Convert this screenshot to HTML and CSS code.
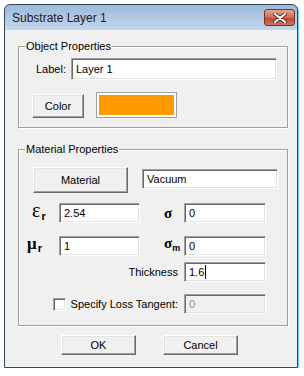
FILE: index.html
```html
<!DOCTYPE html>
<html lang="en">
<head>
    <meta charset="UTF-8">
    <meta name="viewport" content="width=device-width, initial-scale=1.0">
    <title>Substrate Layer 1</title>
    <link rel="stylesheet" href="styles.css">
</head>
<body>
    <div class="window">
        <div class="titlebar">
            <span class="title">Substrate Layer 1</span>
            <button class="close-btn" aria-label="Close">
                <svg width="14" height="10" viewBox="0 0 14 10">
                    <path d="M2 1 L12 9 M12 1 L2 9" stroke="#5a2a24" stroke-width="4" stroke-linecap="round"/>
                    <path d="M2 1 L12 9 M12 1 L2 9" stroke="#fff" stroke-width="2.2" stroke-linecap="round"/>
                </svg>
            </button>
        </div>

        <div class="content">
            <fieldset class="group group-object">
                <legend>Object Properties</legend>

                <div class="label-row">
                    <label for="layer_label">Label:</label>
                    <div class="edit edit-label" id="layer_label">Layer 1</div>
                </div>

                <div class="color-row">
                    <button class="btn btn-color">Color</button>
                    <div class="swatch"><div class="swatch-fill"></div></div>
                </div>
            </fieldset>

            <fieldset class="group group-material">
                <legend>Material Properties</legend>

                <div class="material-row">
                    <button class="btn btn-material">Material</button>
                    <div class="edit edit-material">Vacuum</div>
                </div>

                <div class="prop-row row-eps">
                    <span class="sym sym-eps">&epsilon;<sub>r</sub></span>
                    <div class="edit">2.54</div>
                    <span class="sym sym-sigma">&sigma;</span>
                    <div class="edit">0</div>
                </div>

                <div class="prop-row row-mu">
                    <span class="sym sym-mu">&mu;<sub>r</sub></span>
                    <div class="edit">1</div>
                    <span class="sym sym-sigma">&sigma;<sub>m</sub></span>
                    <div class="edit">0</div>
                </div>

                <div class="prop-row row-thick">
                    <span class="wide-label">Thickness</span>
                    <div class="edit">1.6<span class="caret"></span></div>
                </div>

                <div class="prop-row row-loss">
                    <span class="wide-label">
                        <span class="checkbox"></span>
                        Specify Loss Tangent:
                    </span>
                    <div class="edit edit-disabled">0</div>
                </div>
            </fieldset>

            <div class="dialog-buttons">
                <button class="btn btn-dialog">OK</button>
                <button class="btn btn-dialog">Cancel</button>
            </div>
        </div>
    </div>
</body>
</html>
```

FILE: styles.css
```css
body{
    margin: 0;
    background-color: #ffffff;
    font-family: 'Liberation Sans', Arial, sans-serif;
    font-size: 11px;
    color: #000000;
}

.window{
    width: 292px;
    margin: 4px 0 0 4px;
    border: 1px solid #34475c;
    border-radius: 6px 6px 0 0;
    background: linear-gradient(#9dbad9, #c1d6ec 24px);
    box-shadow: 1px 1px 0 #6ccbef;
}

.titlebar{
    height: 24px;
    display: flex;
    align-items: flex-start;
    justify-content: space-between;
}

.title{
    margin: 6px 0 0 7px;
    font-size: 12px;
    color: #1c1c1c;
}

.close-btn{
    width: 31px;
    height: 17px;
    margin: 4px 2px 0 0;
    padding: 0;
    border: 1px solid #7a3128;
    border-radius: 3px;
    background: linear-gradient(#e4a596, #cf6a55 50%, #bf4432 51%, #d0735d);
    display: flex;
    align-items: center;
    justify-content: center;
}

.content{
    height: 337px;
    margin-top: 1px;
    background-color: #f0f0f0;
    box-sizing: border-box;
    overflow: hidden;
}

/* etched group boxes */
.group{
    margin: 0 9px 0 13px;
    padding: 0;
    border: 1px solid #a0a0a0;
    box-shadow: inset 1px 1px 0 #ffffff, 1px 1px 0 #ffffff;
    min-width: 0;
}

.group legend{
    margin-left: 6px;
    padding: 0 1px;
    line-height: 13px;
    background-color: #f0f0f0;
}

.group-object{
    margin-top: 10px;
    padding-bottom: 9px;
}

.group-material{
    margin-top: 15px;
    padding-bottom: 11px;
}

/* sunken edit boxes */
.edit{
    box-sizing: border-box;
    height: 20px;
    padding: 0 0 0 4px;
    line-height: 18px;
    background-color: #ffffff;
    border: 1px solid;
    border-color: #a0a0a0 #ffffff #ffffff #a0a0a0;
    box-shadow: inset 1px 1px 0 #696969, inset -1px -1px 0 #e3e3e3;
    white-space: nowrap;
}

.edit-disabled{
    background-color: #f0f0f0;
    color: #8d8d8d;
}

.caret{
    display: inline-block;
    width: 1px;
    height: 14px;
    margin-left: 1px;
    background-color: #000000;
    vertical-align: -3px;
}

/* raised push buttons */
.btn{
    box-sizing: border-box;
    padding: 0;
    font-family: inherit;
    font-size: 11px;
    color: #000000;
    background-color: #f0f0f0;
    border: 1px solid;
    border-color: #ffffff #696969 #696969 #ffffff;
    box-shadow: inset -1px -1px 0 #a0a0a0, inset 1px 1px 0 #e3e3e3;
}

.label-row{
    display: flex;
    align-items: center;
    margin-top: 5px;
    padding-left: 17px;
}

.label-row label{
    margin-right: 5px;
}

.edit-label{
    width: 206px;
    height: 22px;
    line-height: 20px;
}

.color-row{
    display: flex;
    align-items: flex-end;
    margin-top: 12px;
    padding-left: 13px;
}

.btn-color{
    width: 52px;
    height: 24px;
}

.swatch{
    box-sizing: border-box;
    width: 81px;
    height: 26px;
    margin-left: 12px;
    padding: 2px;
    border: 1px solid #a0a0a0;
    background-color: #ffffff;
}

.swatch-fill{
    height: 100%;
    background-color: #ff9900;
}

.material-row{
    display: flex;
    align-items: flex-start;
    margin-top: 11px;
    padding-left: 14px;
}

.btn-material{
    width: 95px;
    height: 26px;
}

.edit-material{
    width: 136px;
    margin: 2px 0 0 14px;
}

.prop-row{
    display: grid;
    grid-template-columns: 40px 81px 44px 82px;
    align-items: center;
    height: 20px;
}

.row-eps{
    margin-top: 7px;
}

.row-mu{
    margin-top: 13px;
}

.row-thick{
    margin-top: 9px;
}

.row-loss{
    margin-top: 12px;
}

.sym{
    font-family: 'Liberation Serif', 'DejaVu Serif', serif;
    font-weight: bold;
    line-height: 20px;
    white-space: nowrap;
}

.sym sub{
    font-family: 'Liberation Sans', Arial, sans-serif;
    font-size: 11px;
    vertical-align: -3px;
    margin-left: 1px;
}

.sym-eps{
    padding-left: 13px;
    font-size: 20px;
    font-weight: normal;
}

.sym-eps sub{
    font-weight: bold;
}

.sym-mu{
    padding-left: 8px;
    font-size: 17px;
}

.sym-sigma{
    padding-left: 24px;
    font-size: 15px;
}

.sym-sigma sub{
    font-size: 9px;
    margin-left: 0;
}

.wide-label{
    grid-column: 1 / 4;
    display: flex;
    align-items: center;
    justify-content: flex-end;
    padding-right: 6px;
}

.row-loss .edit{
    grid-column: 4;
}

.checkbox{
    box-sizing: border-box;
    width: 13px;
    height: 13px;
    margin-right: 5px;
    background-color: #ffffff;
    border: 1px solid;
    border-color: #a0a0a0 #ffffff #ffffff #a0a0a0;
    box-shadow: inset 1px 1px 0 #696969, inset -1px -1px 0 #e3e3e3;
}

.dialog-buttons{
    display: flex;
    gap: 27px;
    margin-top: 9px;
    padding-left: 56px;
}

.btn-dialog{
    width: 75px;
    height: 20px;
}
```
